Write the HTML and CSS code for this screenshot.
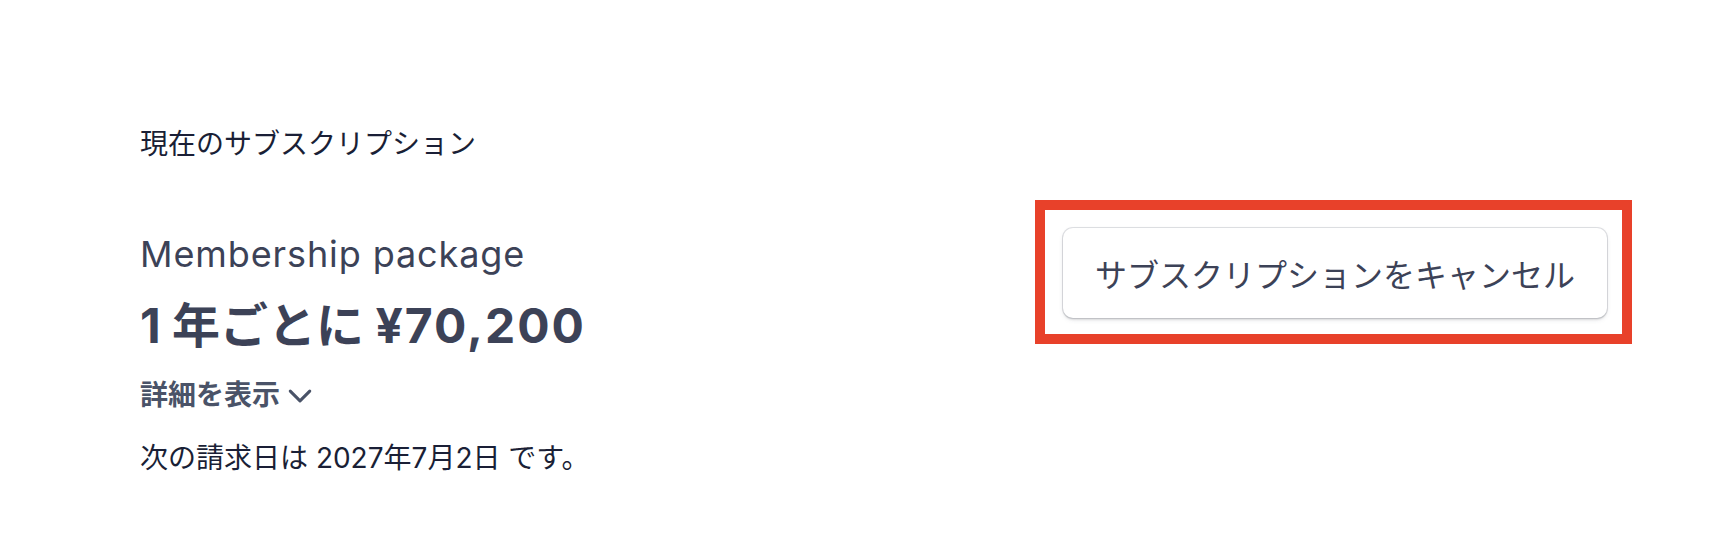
FILE: index.html
```html
<!DOCTYPE html>
<html lang="ja">
<head>
<meta charset="utf-8">
<link rel="stylesheet" href="styles.css">
</head>
<body>
<main class="page">
  <h2 class="section-title">現在のサブスクリプション</h2>
  <div class="sub-row">
    <div class="sub-info">
      <div class="plan-name">Membership package</div>
      <div class="plan-price">1 年ごとに <span class="amount">¥70,200</span></div>
      <button class="details-link" type="button">詳細を表示<svg class="chev" viewBox="0 0 24 24" width="26" height="26"><polyline points="3,7.5 12,16.5 21,7.5" fill="none" stroke="currentColor" stroke-width="2.8" stroke-linecap="round" stroke-linejoin="round"/></svg></button>
      <p class="next-bill">次の請求日は 2027年7月2日 です。</p>
    </div>
    <div class="highlight">
      <button class="cancel-btn" type="button">サブスクリプションをキャンセル</button>
    </div>
  </div>
</main>
</body>
</html>
```

FILE: styles.css
```css
* { box-sizing: border-box; }
html, body { margin: 0; padding: 0; background: #ffffff; }
body {
  font-family: "Inter", "Noto Sans CJK JP", sans-serif;
  color: #1a1f36;
}
.page {
  padding: 124px 80px 0 140px;
}
.section-title {
  margin: 0;
  font-size: 28px;
  line-height: 40px;
  font-weight: 400;
  color: #1a1f36;
}
.sub-row {
  margin-top: 36px;
  display: flex;
  justify-content: space-between;
  align-items: flex-start;
}
.sub-info {
  padding-top: 30px;
  display: flex;
  flex-direction: column;
  align-items: flex-start;
}
.plan-name {
  font-size: 36px;
  line-height: 48px;
  letter-spacing: 0.9px;
  color: #3c4257;
  font-weight: 400;
}
.plan-price {
  margin-top: 18px;
  font-size: 48px;
  line-height: 60px;
  font-weight: 700;
  color: #3c4257;
}
.amount {
  letter-spacing: 2px;
}
.details-link {
  margin-top: 19px;
  padding: 0;
  border: 0;
  background: none;
  font-family: inherit;
  font-size: 28px;
  line-height: 40px;
  font-weight: 600;
  color: #4a5368;
  display: flex;
  align-items: center;
  gap: 7px;
  cursor: pointer;
}
.chev { display: block; margin-top: 2px; }
.next-bill {
  margin: 23px 0 0;
  font-size: 28px;
  line-height: 40px;
  color: #1a1f36;
}
.highlight {
  border: 10px solid #e8412a;
  padding: 18px 15px 16px 18px;
}
.cancel-btn {
  width: 544px;
  height: 90px;
  border: 0;
  border-radius: 10px;
  background: #ffffff;
  box-shadow: 0 0 0 1px rgba(60, 66, 87, 0.16), 0 2px 5px rgba(60, 66, 87, 0.1), 0 2px 2px rgba(0, 0, 0, 0.1);
  font-family: "Inter", "Noto Sans CJK JP", sans-serif;
  font-size: 32px;
  font-weight: 400;
  color: #3c4257;
  cursor: pointer;
}
```
